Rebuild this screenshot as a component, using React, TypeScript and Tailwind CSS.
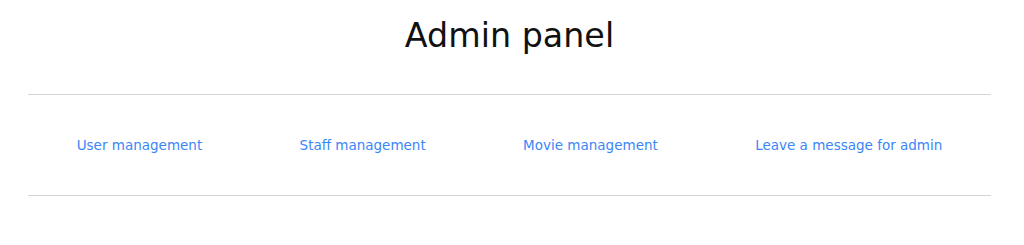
const links = [
  "User management",
  "Staff management",
  "Movie management",
  "Leave a message for admin",
]

export default function App() {
  return (
    <div className="min-h-[245px] bg-white font-['DejaVu_Sans',sans-serif] text-[#111]">
      <div className="ml-[28px] w-[963px]">
        <h1 className="pt-[11px] text-center text-[33.33px] leading-normal font-normal">
          Admin panel
        </h1>
        <nav className="mt-[33px] border-y border-[#d4d4d4] py-[40px]">
          <ul className="flex justify-around text-[13.5px] leading-normal">
            {links.map((l) => (
              <li key={l}>
                <a href="#" className="text-[#3b86f7]">
                  {l}
                </a>
              </li>
            ))}
          </ul>
        </nav>
      </div>
    </div>
  )
}
